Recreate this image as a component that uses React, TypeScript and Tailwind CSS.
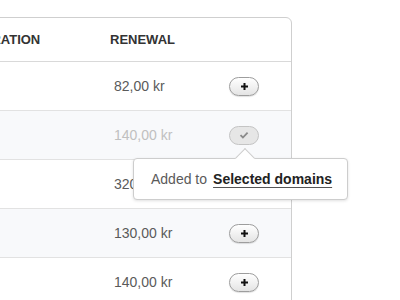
import React from 'react'

const rows = [
  { renewal: '82,00 kr', added: false },
  { renewal: '140,00 kr', added: true },
  { renewal: '320,00 kr', added: false },
  { renewal: '130,00 kr', added: false },
  { renewal: '140,00 kr', added: false },
]

function PlusButton() {
  return (
    <button className="w-[30px] h-[19px] rounded-full border border-[#9d9d9d] bg-gradient-to-b from-white to-[#e4e4e4] shadow-[0_1px_1px_rgba(0,0,0,0.12)] flex items-center justify-center">
      <svg width="9" height="9" viewBox="0 0 9 9">
        <path d="M4.5 1v7M1 4.5h7" stroke="#111" strokeWidth="2" />
      </svg>
    </button>
  )
}

function CheckButton() {
  return (
    <button className="w-[30px] h-[19px] rounded-full border border-[#c4c4c4] bg-[#e6e6e6] flex items-center justify-center">
      <svg width="10" height="8" viewBox="0 0 10 8">
        <path d="M1.5 4.2l2.4 2.3L8.6 1.6" stroke="#8a8a8a" strokeWidth="1.8" fill="none" />
      </svg>
    </button>
  )
}

export default function App() {
  return (
    <div className="relative w-[400px] h-[300px] overflow-hidden bg-white font-['Liberation_Sans',Arial,sans-serif]">
      <div className="pt-[17px]">
        <div className="ml-[-120px] w-[412px] rounded-tr-[6px] border border-[#cfcfcf] bg-white">
          {/* header */}
          <div className="flex items-center h-[44px] border-b border-[#d9d9d9] text-[13px] font-bold text-[#333]">
            <div className="w-[62px]" />
            <div className="w-[167px]">REGISTRATION</div>
            <div className="w-[119px]">RENEWAL</div>
            <div className="flex-1" />
          </div>
          {rows.map((r, i) => (
            <div
              key={i}
              className={`flex items-center h-[49px] border-b border-[#e2e2e2] text-[14px] ${
                i % 2 === 1 ? 'bg-[#f8f9fb]' : 'bg-white'
              } ${r.added ? 'text-[#c0c0c0]' : 'text-[#5a5a5a]'}`}
            >
              <div className="w-[233px]" />
              <div className="w-[115px]">{r.renewal}</div>
              <div>{r.added ? <CheckButton /> : <PlusButton />}</div>
            </div>
          ))}
        </div>
      </div>

      {/* tooltip */}
      <div className="absolute left-[133px] top-[158px] w-[215px] h-[42px] rounded-[4px] border border-[#cdcdcd] bg-white shadow-[0_1px_3px_rgba(0,0,0,0.12)] flex items-center pl-[17px] text-[14px] text-[#5a5a5a]">
        <div className="absolute left-[104px] top-[-8px] w-[14px] h-[14px] rotate-45 bg-white border-t border-l border-[#cdcdcd]" />
        <span className="relative">Added to</span>
        <span className="relative ml-[6px] font-bold text-[#222] underline decoration-[#555] underline-offset-[3px]">
          Selected domains
        </span>
      </div>
    </div>
  )
}
